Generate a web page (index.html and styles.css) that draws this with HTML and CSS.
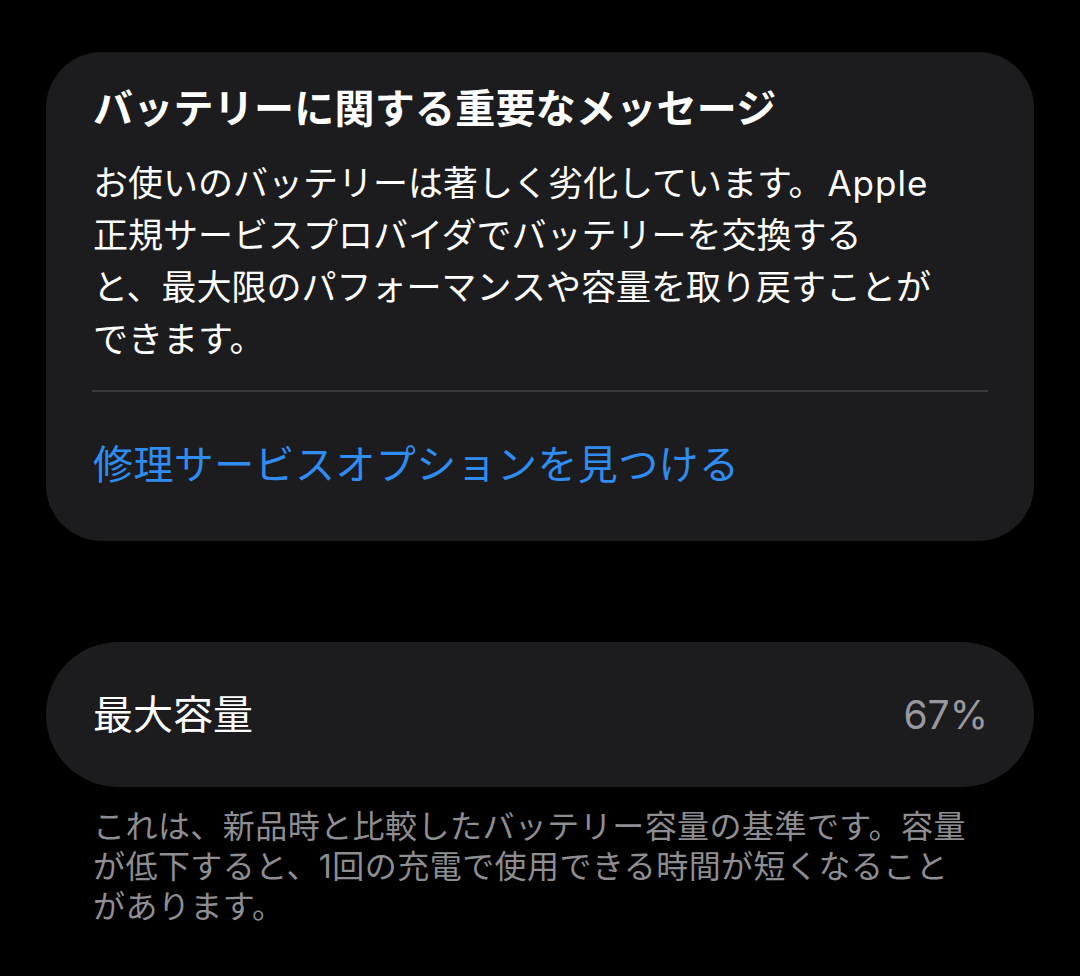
FILE: index.html
```html
<!DOCTYPE html>
<html lang="ja">
<head>
<meta charset="utf-8">
<link rel="stylesheet" href="styles.css">
</head>
<body>
<main class="page">
  <section class="card message">
    <h1 class="title">バッテリーに関する重要なメッセージ</h1>
    <p class="body">お使いのバッテリーは著しく劣化しています。<span class="latin">Apple</span><br>正規サービスプロバイダでバッテリーを交換する<br>と、最大限のパフォーマンスや容量を取り戻すことが<br>できます。</p>
    <div class="sep"></div>
    <a class="link">修理サービスオプションを見つける</a>
  </section>
  <section class="card capacity">
    <span class="label">最大容量</span>
    <span class="value">67%</span>
  </section>
  <p class="footnote">これは、新品時と比較したバッテリー容量の基準です。容量<br>が低下すると、1回の充電で使用できる時間が短くなること<br>があります。</p>
</main>
</body>
</html>
```

FILE: styles.css
```css
html, body {
  margin: 0;
  padding: 0;
  background: #000;
}
body {
  width: 1080px;
  height: 976px;
  overflow: hidden;
  font-family: "Inter", "Noto Sans CJK JP", sans-serif;
  color: #fff;
}
.page {
  display: flex;
  flex-direction: column;
  padding: 52px 46px 0 46px;
}
.card {
  background: #1c1c1e;
  box-sizing: border-box;
  width: 988px;
}
.message {
  border-radius: 56px;
  padding: 33px 46px 52px 47px;
  display: flex;
  flex-direction: column;
}
.title {
  margin: 0;
  font-size: 40px;
  line-height: 48px;
  font-weight: 700;
  letter-spacing: 0.25px;
}
.body {
  margin: 24px 0 0 0;
  font-size: 35px;
  line-height: 52px;
  font-weight: 400;
  white-space: nowrap;
}
.latin {
  margin-left: 4px;
  letter-spacing: 1px;
}
.sep {
  margin-top: 25px;
  height: 2px;
  background: #38383a;
  margin-left: -1px;
}
.link {
  margin-top: 49px;
  font-size: 40px;
  line-height: 48px;
  color: #2f8cf0;
  text-decoration: none;
  letter-spacing: 0.4px;
}
.capacity {
  margin-top: 101px;
  height: 145px;
  border-radius: 72px;
  display: flex;
  align-items: center;
  justify-content: space-between;
  padding: 0 46px 0 47px;
}
.label {
  font-size: 40px;
  line-height: 48px;
}
.value {
  font-size: 39px;
  line-height: 48px;
  color: #98989e;
}
.footnote {
  margin: 20px 0 0 47px;
  font-size: 32px;
  line-height: 40px;
  color: #8d8d92;
  white-space: nowrap;
  letter-spacing: 0.45px;
}
```
